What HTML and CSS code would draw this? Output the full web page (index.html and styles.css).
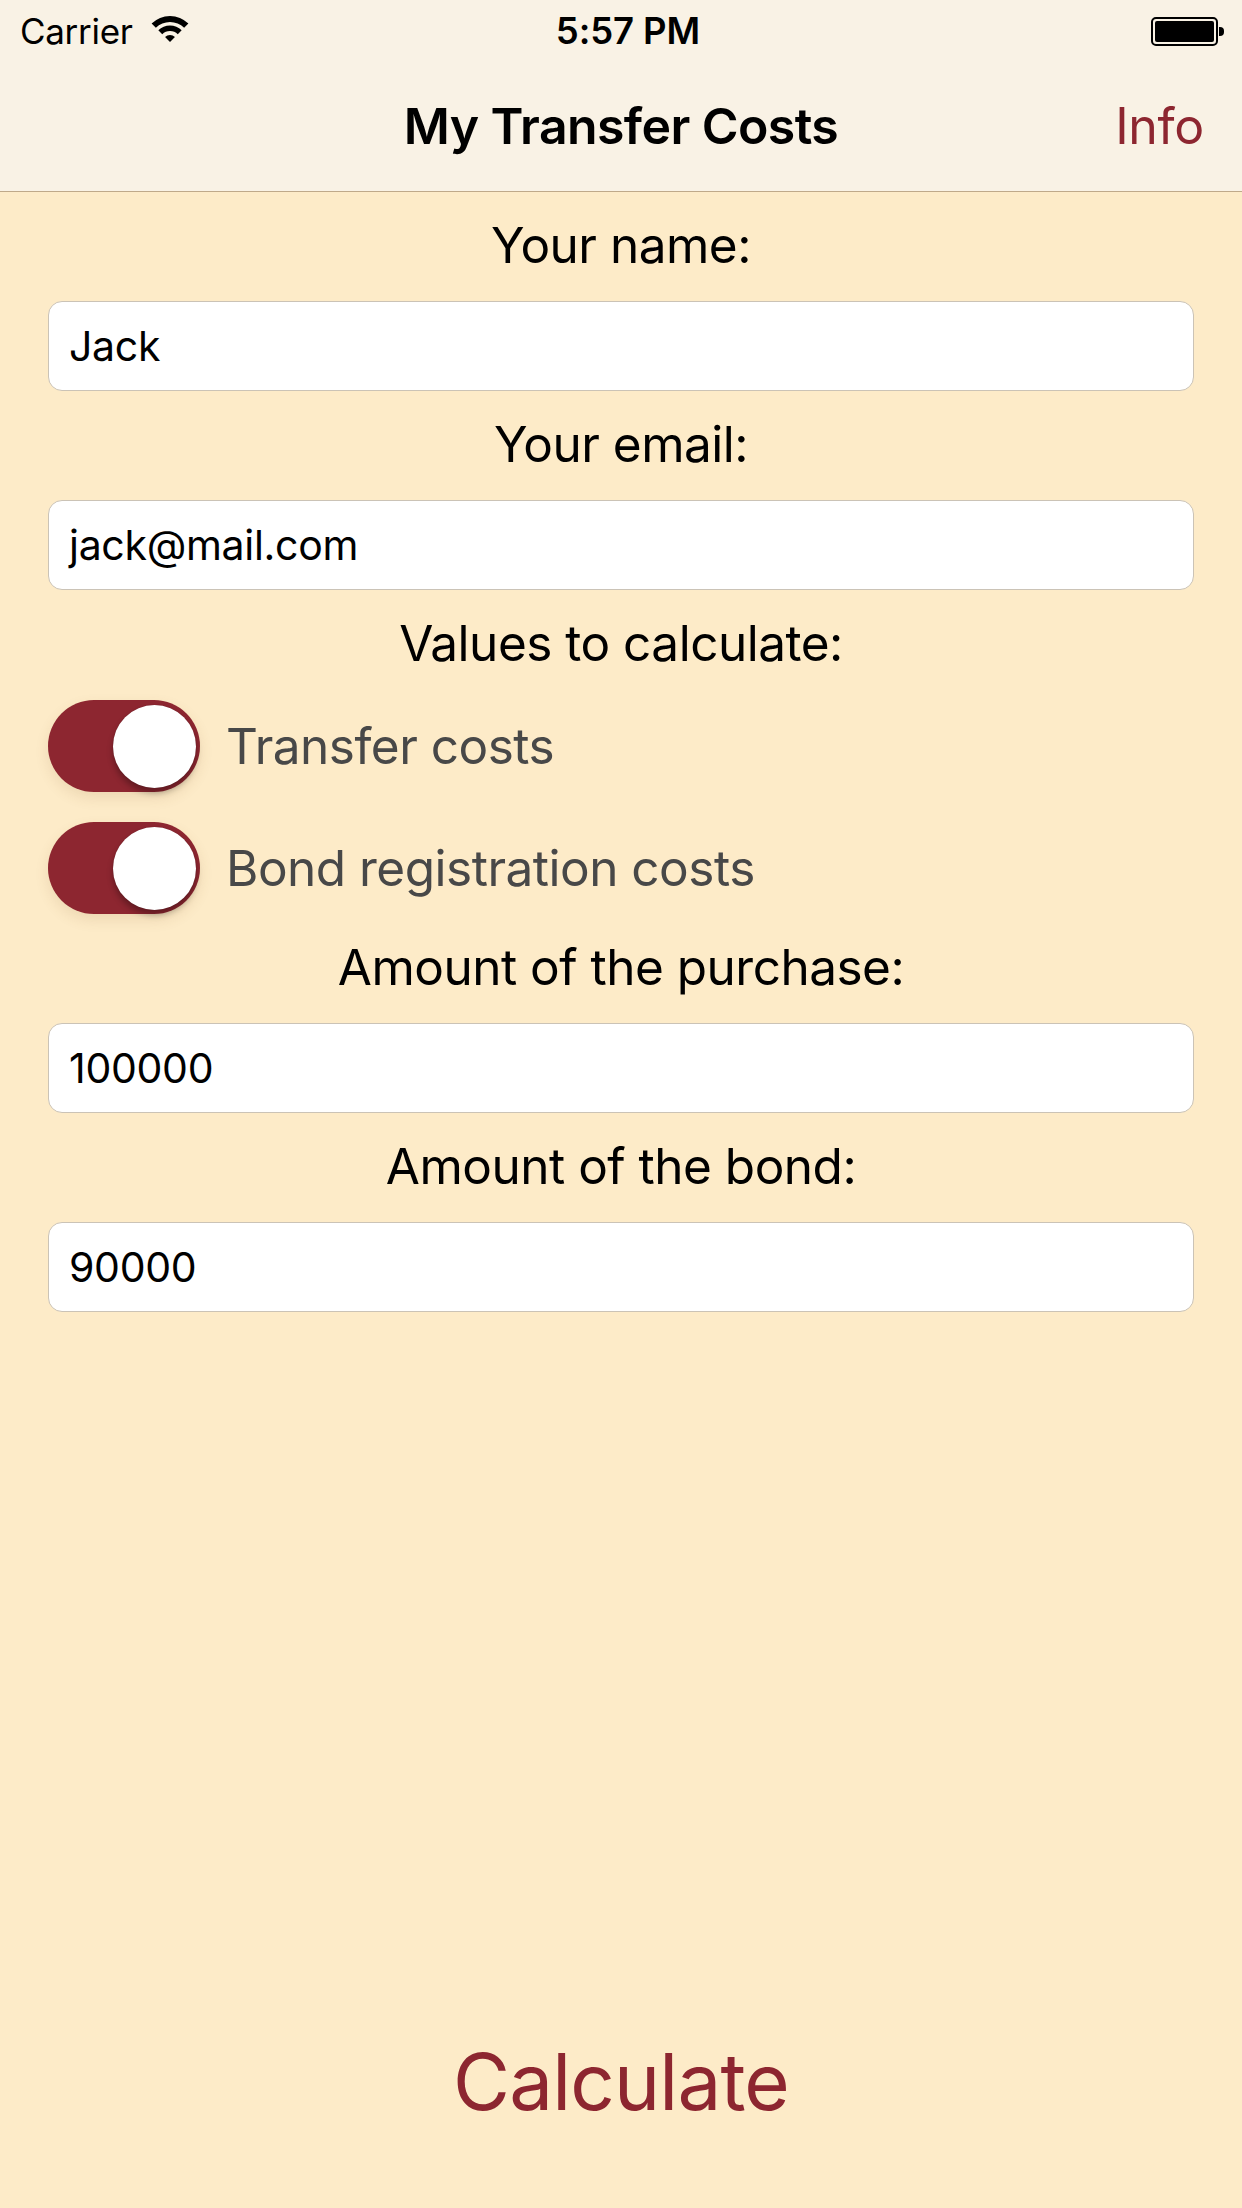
FILE: index.html
```html
<!DOCTYPE html>
<html lang="en">
<head>
<meta charset="utf-8">
<title>My Transfer Costs</title>
<link rel="stylesheet" href="styles.css">
</head>
<body>
<div class="screen">
  <header class="topbar">
    <div class="status">
      <div class="status-left">
        <span class="carrier">Carrier</span>
        <svg class="wifi" viewBox="0 0 38 28" width="38" height="28" aria-hidden="true">
          <path d="M0.62 8.62 A26 26 0 0 1 37.38 8.62 L33.14 12.86 A20 20 0 0 0 4.86 12.86 Z" fill="#000"/>
          <path d="M7.33 15.33 A16.5 16.5 0 0 1 30.67 15.33 L26.78 19.22 A11 11 0 0 0 11.22 19.22 Z" fill="#000"/>
          <path d="M14.05 22.05 A7 7 0 0 1 23.95 22.05 L19 27 Z" fill="#000"/>
        </svg>
      </div>
      <span class="time">5:57 PM</span>
      <div class="status-right">
        <div class="battery"><div class="battery-fill"></div></div>
        <div class="battery-tip"></div>
      </div>
    </div>
    <nav class="navbar">
      <span class="nav-side"></span>
      <h1 class="nav-title">My Transfer Costs</h1>
      <span class="nav-side nav-info">Info</span>
    </nav>
  </header>

  <main class="form">
    <label class="field-label">Your name:</label>
    <div class="field">Jack</div>

    <label class="field-label">Your email:</label>
    <div class="field">jack@mail.com</div>

    <label class="field-label">Values to calculate:</label>
    <div class="toggle-row">
      <div class="switch"><div class="knob"></div></div>
      <span class="toggle-text">Transfer costs</span>
    </div>
    <div class="toggle-row second">
      <div class="switch"><div class="knob"></div></div>
      <span class="toggle-text">Bond registration costs</span>
    </div>

    <label class="field-label">Amount of the purchase:</label>
    <div class="field">100000</div>

    <label class="field-label">Amount of the bond:</label>
    <div class="field">90000</div>
  </main>

  <div class="action">
    <span class="calculate">Calculate</span>
  </div>
</div>
</body>
</html>
```

FILE: styles.css
```css
* { box-sizing: border-box; }

html, body {
  margin: 0;
  padding: 0;
}

body {
  width: 1242px;
  height: 2208px;
  background: #fdebc8;
  font-family: Inter, "Noto Sans", "Liberation Sans", sans-serif;
  color: #000;
  overflow: hidden;
}

.screen {
  width: 1242px;
  height: 2208px;
  display: flex;
  flex-direction: column;
}

.topbar {
  background: #f9f2e5;
  border-bottom: 1px solid #bfa98a;
  height: 192px;
  display: flex;
  flex-direction: column;
}

.status {
  height: 60px;
  display: flex;
  align-items: center;
  justify-content: space-between;
  padding: 3px 18px 0 20px;
}

.status-left {
  display: flex;
  align-items: center;
  gap: 18px;
  width: 300px;
}

.carrier {
  font-size: 35px;
  letter-spacing: -0.3px;
  line-height: 57px;
}

.wifi {
  display: block;
  margin-top: -6px;
}

.time {
  font-size: 36.5px;
  font-weight: 600;
  line-height: 57px;
  letter-spacing: -0.1px;
  margin-left: 12px;
}

.status-right {
  width: 300px;
  display: flex;
  align-items: center;
  justify-content: flex-end;
  margin-top: -1px;
}

.battery {
  width: 67px;
  height: 29px;
  border: 2px solid #000;
  border-radius: 5px;
  padding: 2px;
}

.battery-fill {
  width: 100%;
  height: 100%;
  background: #000;
  border-radius: 2px;
}

.battery-tip {
  width: 5px;
  height: 9px;
  background: #000;
  border-radius: 0 4px 4px 0;
  margin-left: 1px;
}

.navbar {
  height: 132px;
  display: flex;
  align-items: center;
  justify-content: space-between;
  padding: 0 38px 0 38px;
}

.nav-side {
  width: 200px;
}

.nav-title {
  margin: 0;
  font-size: 50px;
  font-weight: 600;
  letter-spacing: -0.6px;
  white-space: nowrap;
}

.nav-info {
  text-align: right;
  color: #8d2630;
  font-size: 50px;
  letter-spacing: -0.3px;
}

.form {
  flex: 1;
  display: flex;
  flex-direction: column;
  padding: 0 48px;
}

.field-label {
  display: block;
  text-align: center;
  font-size: 49.5px;
  line-height: 62px;
  height: 62px;
  margin-top: 22px;
  margin-bottom: 25px;
  letter-spacing: -0.5px;
}

.field {
  height: 90px;
  background: #fff;
  border: 1.5px solid #cbc3b6;
  border-radius: 14px;
  padding: 0 20px;
  display: flex;
  align-items: center;
  font-size: 41px;
  letter-spacing: -0.3px;
}

.toggle-row {
  display: flex;
  align-items: center;
  gap: 26px;
  height: 93px;
}

.toggle-row.second {
  margin-top: 29px;
}

.toggle-row.second + .field-label {
  margin-top: 22px;
}

.switch {
  position: relative;
  width: 152px;
  height: 92px;
  border-radius: 46px;
  background: #8d2630;
  box-shadow: 0 6px 14px rgba(120, 80, 30, 0.12);
  flex-shrink: 0;
}

.knob {
  position: absolute;
  right: 4px;
  top: 5px;
  width: 83px;
  height: 83px;
  border-radius: 50%;
  background: #fff;
  box-shadow: 0 5px 6px rgba(0, 0, 0, 0.3), 0 0 1px rgba(0, 0, 0, 0.25);
}

.toggle-text {
  font-size: 49.5px;
  color: #484848;
  letter-spacing: -0.5px;
  white-space: nowrap;
}

.action {
  height: 204px;
  display: flex;
  align-items: flex-start;
  justify-content: center;
  padding-top: 28px;
}

.calculate {
  color: #8d2630;
  font-size: 78px;
  line-height: 100px;
  letter-spacing: -0.8px;
}
```
